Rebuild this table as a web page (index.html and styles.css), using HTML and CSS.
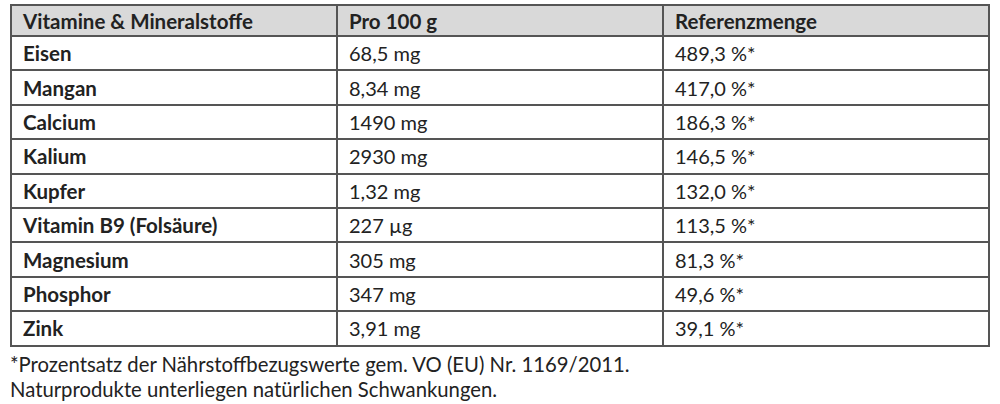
FILE: index.html
```html
<!DOCTYPE html>
<html lang="de">

<head>
    <meta charset="UTF-8">
    <meta name="viewport" content="width=device-width, initial-scale=1.0">
    <title>Vitamine &amp; Mineralstoffe</title>
    <link rel="stylesheet" href="styles.css">
</head>

<body>
    <div class="wrapper">
        <table class="nutrients">
            <thead>
                <tr>
                    <th>Vitamine &amp; Mineralstoffe</th>
                    <th>Pro 100 g</th>
                    <th>Referenzmenge</th>
                </tr>
            </thead>
            <tbody>
                <tr>
                    <td class="name">Eisen</td>
                    <td>68,5 mg</td>
                    <td>489,3 %*</td>
                </tr>
                <tr>
                    <td class="name">Mangan</td>
                    <td>8,34 mg</td>
                    <td>417,0 %*</td>
                </tr>
                <tr>
                    <td class="name">Calcium</td>
                    <td>1490 mg</td>
                    <td>186,3 %*</td>
                </tr>
                <tr>
                    <td class="name">Kalium</td>
                    <td>2930 mg</td>
                    <td>146,5 %*</td>
                </tr>
                <tr>
                    <td class="name">Kupfer</td>
                    <td>1,32 mg</td>
                    <td>132,0 %*</td>
                </tr>
                <tr>
                    <td class="name">Vitamin B9 (Folsäure)</td>
                    <td>227 µg</td>
                    <td>113,5 %*</td>
                </tr>
                <tr>
                    <td class="name">Magnesium</td>
                    <td>305 mg</td>
                    <td>81,3 %*</td>
                </tr>
                <tr>
                    <td class="name">Phosphor</td>
                    <td>347 mg</td>
                    <td>49,6 %*</td>
                </tr>
                <tr>
                    <td class="name">Zink</td>
                    <td>3,91 mg</td>
                    <td>39,1 %*</td>
                </tr>
            </tbody>
        </table>

        <p class="note">*Prozentsatz der Nährstoffbezugswerte gem. VO (EU) Nr. 1169/2011.</p>
        <p class="note">Naturprodukte unterliegen natürlichen Schwankungen.</p>
    </div>
</body>

</html>
```

FILE: styles.css
```css
* {
    margin: 0;
    padding: 0;
    box-sizing: border-box;
}

body {
    font-family: Lato, "Open Sans", sans-serif;
    background-color: #fff;
    color: #222;
}

.wrapper {
    padding: 4px 10px 0 10px;
}

.nutrients {
    width: 100%;
    border-collapse: collapse;
    table-layout: fixed;
}

.nutrients th,
.nutrients td {
    border: 2px solid #555;
    padding: 0 11px;
    text-align: left;
    vertical-align: middle;
    font-size: 20px;
    white-space: nowrap;
}

.nutrients th {
    background-color: #d9d9d9;
    font-size: 20.5px;
    font-weight: bold;
    height: 31px;
}

.nutrients td {
    height: 34.4px;
}

.nutrients td.name {
    font-size: 20.5px;
    font-weight: bold;
}

.note {
    font-size: 20.3px;
    line-height: 25px;
}

.note:first-of-type {
    margin-top: 5px;
}
```
